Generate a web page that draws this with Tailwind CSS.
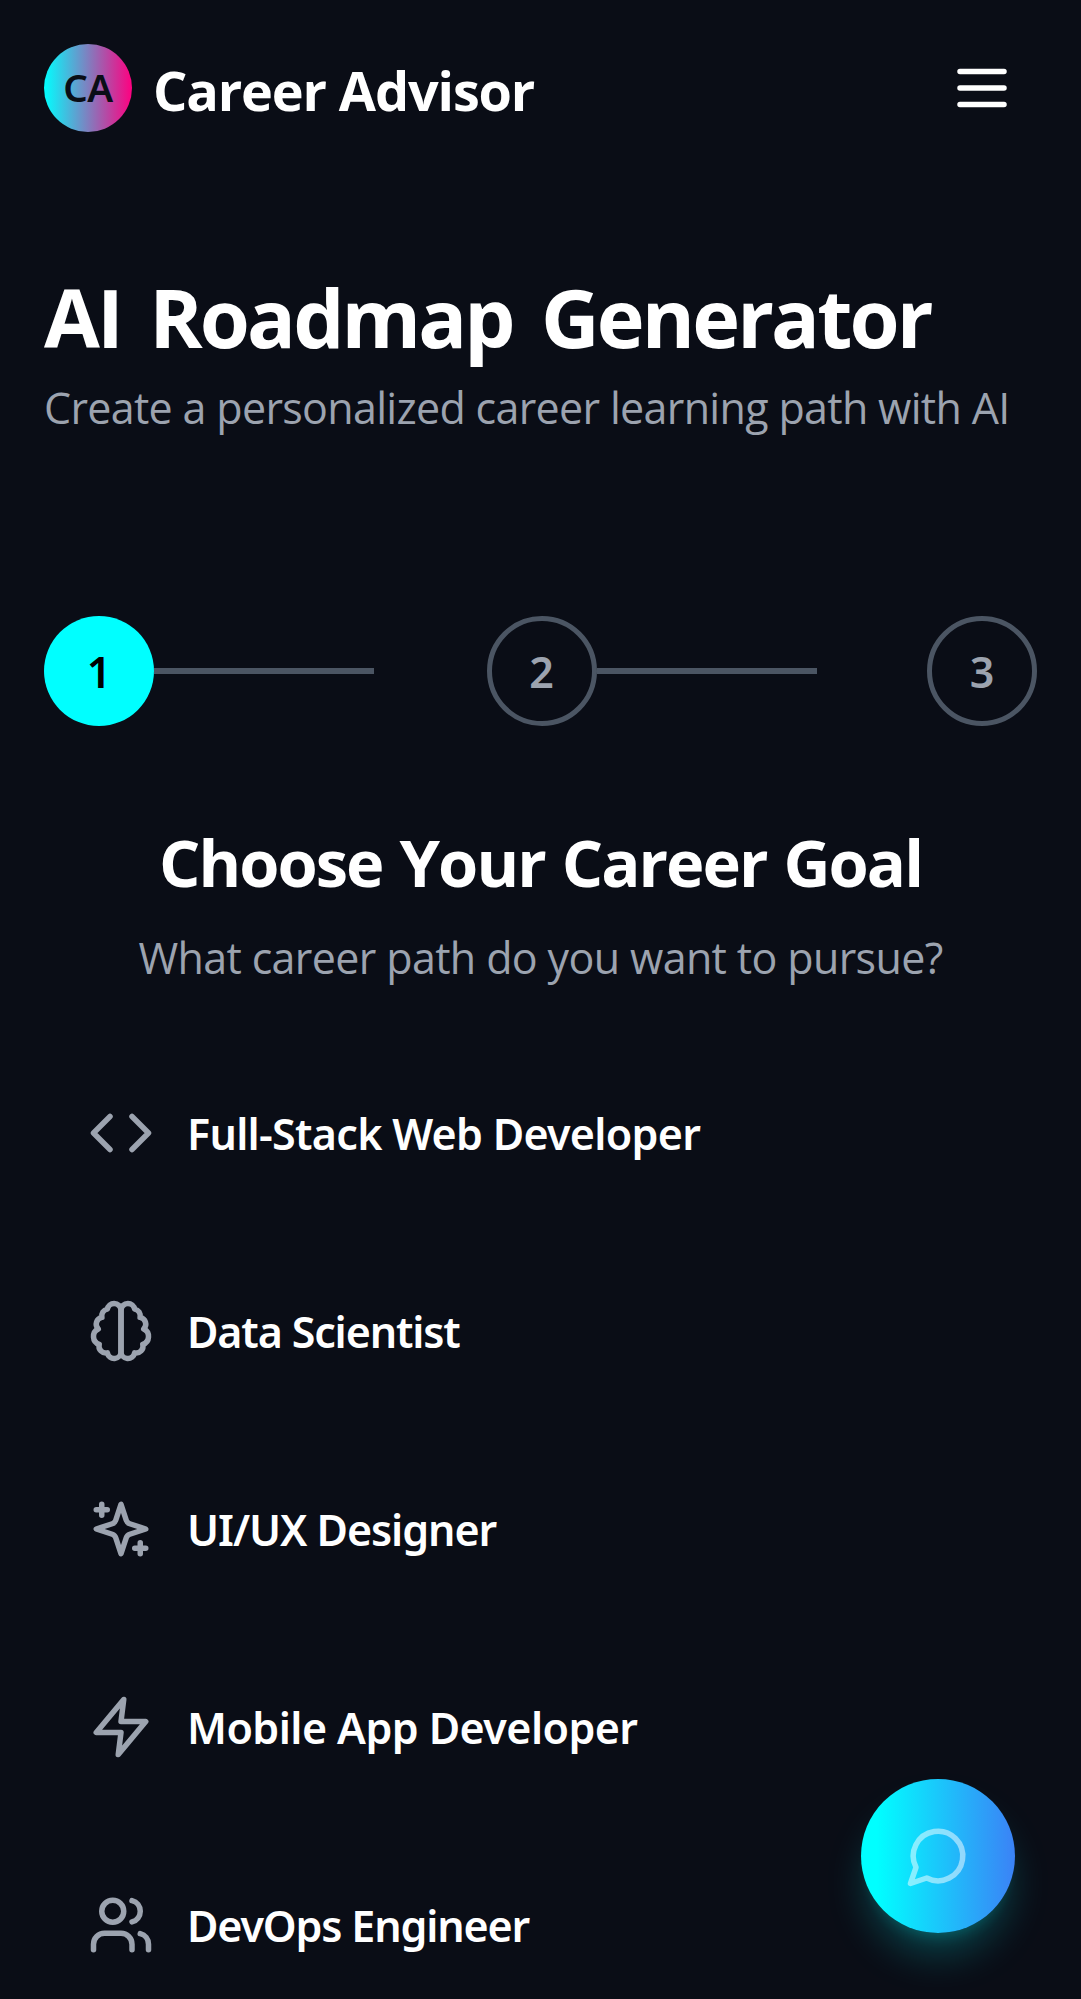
<!DOCTYPE html>
<html lang="en">
<head>
<meta charset="utf-8">
<title>Career Advisor</title>
<script src="https://cdn.jsdelivr.net/npm/@tailwindcss/browser@4"></script>
</head>
<body class="h-[1999px] overflow-hidden bg-[#0a0d16] font-['Noto_Sans','Open_Sans',sans-serif] text-white">
  <header class="flex h-44 items-center justify-between px-11">
    <div class="flex items-center gap-[21px]">
      <div class="flex size-22 items-center justify-center rounded-full bg-linear-to-r/srgb from-[#00ffff] to-[#ff0080] text-[38.5px] font-semibold tracking-[-0.5px] text-[#0a0d16]">CA</div>
      <span class="pt-1 font-['Open_Sans',sans-serif] text-[54px] font-bold tracking-[-1.15px] whitespace-nowrap">Career Advisor</span>
    </div>
    <svg class="mr-[22px] size-[66px]" viewBox="0 0 24 24" fill="none" stroke="currentColor" stroke-width="2" stroke-linecap="round" stroke-linejoin="round"><path d="M4 6h16M4 12h16M4 18h16"/></svg>
  </header>

  <main class="px-11 pt-[91px]">
    <h1 class="font-['Open_Sans',sans-serif] text-[81px] leading-[99px] font-bold tracking-[-2.85px] [word-spacing:10px] whitespace-nowrap">AI Roadmap Generator</h1>
    <p class="mt-[9px] font-['Open_Sans',sans-serif] text-[43px] leading-[66px] tracking-[-0.68px] whitespace-nowrap text-[#9ca3af]">Create a personalized career learning path with AI</p>

    <div class="mt-[175px] flex items-center justify-between text-[43px] font-semibold text-[#9ca3af]">
      <div class="flex items-center">
        <div class="flex size-[110px] items-center justify-center rounded-full bg-[#00ffff] pt-0.5 text-black">1</div>
        <div class="h-[5.5px] w-[220px] bg-[#4b5563]"></div>
      </div>
      <div class="ml-[2px] flex items-center">
        <div class="flex size-[110px] items-center justify-center rounded-full border-[5.5px] border-[#4b5563] pt-0.5">2</div>
        <div class="h-[5.5px] w-[220px] bg-[#4b5563]"></div>
      </div>
      <div class="flex size-[110px] items-center justify-center rounded-full border-[5.5px] border-[#4b5563] pt-0.5">3</div>
    </div>

    <section class="mt-[92px]">
      <h2 class="text-center font-['Open_Sans',sans-serif] text-[65px] leading-[88px] font-bold tracking-[-1.95px] [word-spacing:2px] whitespace-nowrap">Choose Your Career Goal</h2>
      <p class="mt-[19px] text-center font-['Open_Sans',sans-serif] text-[43px] leading-[66px] tracking-[-0.64px] whitespace-nowrap text-[#9ca3af]">What career path do you want to pursue?</p>

      <div class="mt-[43px] flex flex-col text-[43px] font-semibold whitespace-nowrap">
        <div class="flex h-[198px] items-center gap-[33px] px-11">
          <svg class="size-[66px] text-[#9ca3af]" viewBox="0 0 24 24" fill="none" stroke="currentColor" stroke-width="2" stroke-linecap="round" stroke-linejoin="round"><path d="m16 18 6-6-6-6"/><path d="m8 6-6 6 6 6"/></svg>
          <span class="pt-0.5 tracking-[-0.71px]">Full-Stack Web Developer</span>
        </div>
        <div class="flex h-[198px] items-center gap-[33px] px-11">
          <svg class="size-[66px] text-[#9ca3af]" viewBox="0 0 24 24" fill="none" stroke="currentColor" stroke-width="2" stroke-linecap="round" stroke-linejoin="round"><path d="M9.5 2A2.5 2.5 0 0 1 12 4.5v15a2.5 2.5 0 0 1-4.96.44 2.5 2.5 0 0 1-2.96-3.08 3 3 0 0 1-.34-5.58 2.5 2.5 0 0 1 1.32-4.24 2.5 2.5 0 0 1 1.98-3A2.5 2.5 0 0 1 9.5 2Z"/><path d="M14.5 2A2.5 2.5 0 0 0 12 4.5v15a2.5 2.5 0 0 0 4.96.44 2.5 2.5 0 0 0 2.96-3.08 3 3 0 0 0 .34-5.58 2.5 2.5 0 0 0-1.32-4.24 2.5 2.5 0 0 0-1.98-3A2.5 2.5 0 0 0 14.5 2Z"/></svg>
          <span class="pt-0.5 tracking-[-1.15px]">Data Scientist</span>
        </div>
        <div class="flex h-[198px] items-center gap-[33px] px-11">
          <svg class="size-[66px] text-[#9ca3af]" viewBox="0 0 24 24" fill="none" stroke="currentColor" stroke-width="2" stroke-linecap="round" stroke-linejoin="round"><path d="m12 3-1.912 5.813a2 2 0 0 1-1.275 1.275L3 12l5.813 1.912a2 2 0 0 1 1.275 1.275L12 21l1.912-5.813a2 2 0 0 1 1.275-1.275L21 12l-5.813-1.912a2 2 0 0 1-1.275-1.275L12 3Z"/><path d="M5 3v4M19 17v4M3 5h4M17 19h4"/></svg>
          <span class="pt-0.5 tracking-[-1.07px]">UI/UX Designer</span>
        </div>
        <div class="flex h-[198px] items-center gap-[33px] px-11">
          <svg class="size-[66px] text-[#9ca3af]" viewBox="0 0 24 24" fill="none" stroke="currentColor" stroke-width="2" stroke-linecap="round" stroke-linejoin="round"><path d="M13 2 3 14h9l-1 8 10-12h-9l1-8z"/></svg>
          <span class="pt-0.5 tracking-[-0.57px]">Mobile App Developer</span>
        </div>
        <div class="flex h-[198px] items-center gap-[33px] px-11">
          <svg class="size-[66px] text-[#9ca3af]" viewBox="0 0 24 24" fill="none" stroke="currentColor" stroke-width="2" stroke-linecap="round" stroke-linejoin="round"><path d="M16 21v-2a4 4 0 0 0-4-4H6a4 4 0 0 0-4 4v2"/><circle cx="9" cy="7" r="4"/><path d="M22 21v-2a4 4 0 0 0-3-3.87M16 3.13a4 4 0 0 1 0 7.75"/></svg>
          <span class="pt-0.5 tracking-[-1.16px]">DevOps Engineer</span>
        </div>
      </div>
    </section>
  </main>

  <button class="fixed right-[66px] bottom-[66px] flex size-[154px] items-center justify-center rounded-full bg-linear-to-r/srgb from-[#00ffff] from-10% to-[#3b82f6] shadow-[0_27px_41px_-8px_rgba(0,255,255,0.25),0_11px_16px_-11px_rgba(0,255,255,0.25)]" aria-label="Open chat">
    <svg class="size-[66px] text-white/50" viewBox="0 0 24 24" fill="none" stroke="currentColor" stroke-width="2" stroke-linecap="round" stroke-linejoin="round"><path d="M7.9 20A9 9 0 1 0 4 16.1L2 22Z"/></svg>
  </button>
</body>
</html>
